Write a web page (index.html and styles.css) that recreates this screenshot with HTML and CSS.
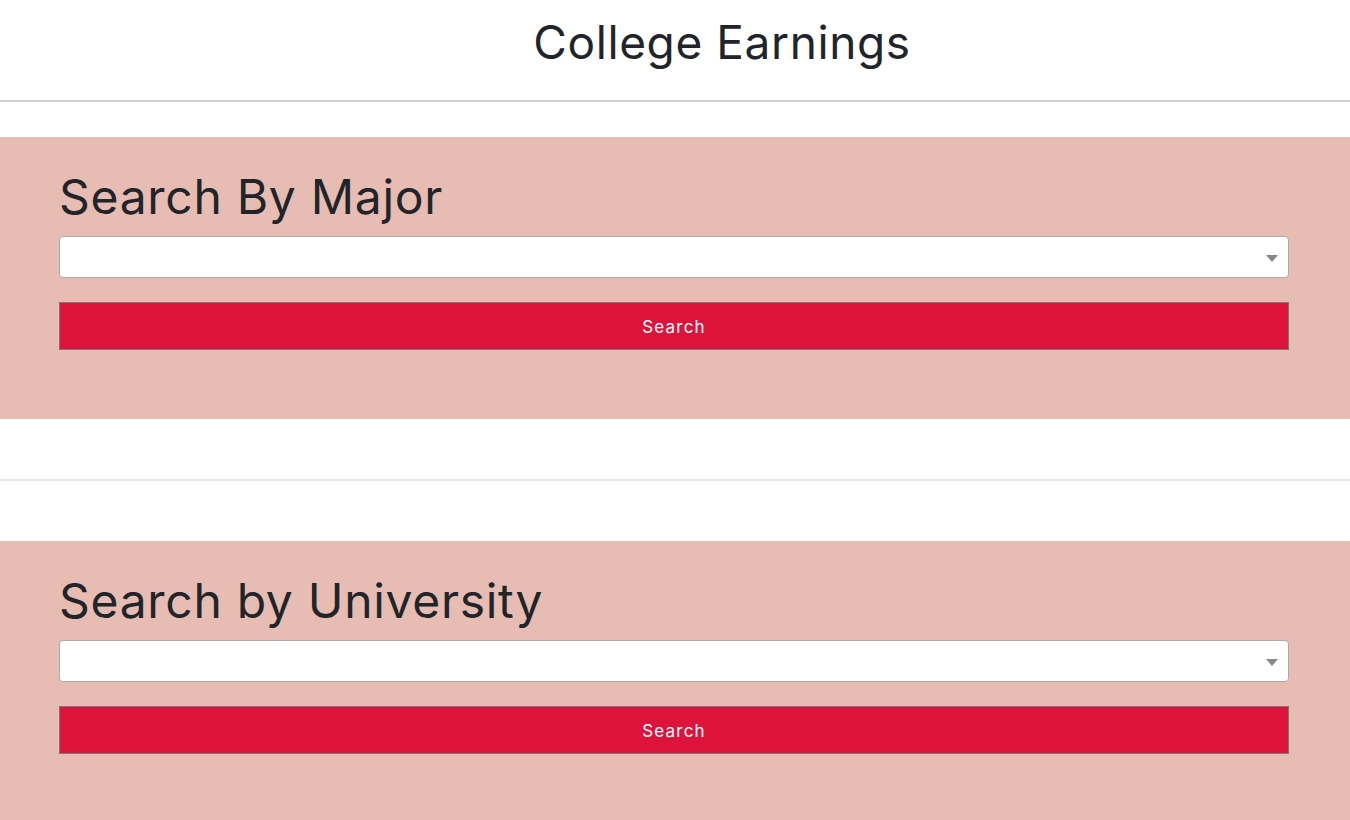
FILE: index.html
```html
<!DOCTYPE html>
<html lang="en">
<head>
<meta charset="utf-8">
<title>College Earnings</title>
<link rel="stylesheet" href="styles.css">
</head>
<body>
<header class="site-header">
  <h1 class="site-title">College Earnings</h1>
</header>
<main>
  <section class="search-panel panel-major">
    <h2 class="panel-title">Search By Major</h2>
    <div class="select-box"><span class="select-arrow"></span></div>
    <button class="search-btn" type="button">Search</button>
  </section>
  <hr class="divider">
  <section class="search-panel panel-university">
    <h2 class="panel-title">Search by University</h2>
    <div class="select-box"><span class="select-arrow"></span></div>
    <button class="search-btn" type="button">Search</button>
  </section>
</main>
</body>
</html>
```

FILE: styles.css
```css
* { box-sizing: border-box; }
html, body { margin: 0; padding: 0; }
body {
  font-family: Inter, "Open Sans", "Liberation Sans", sans-serif;
  color: #212529;
  background: #fff;
  overflow: hidden;
}
.site-header {
  height: 102px;
  border-bottom: 2px solid #d2d2d2;
  display: flex;
  align-items: center;
  justify-content: center;
  padding-left: 94px;
}
.site-title {
  margin: 0;
  font-weight: 400;
  font-size: 46px;
  letter-spacing: 0.6px;
  line-height: 1.2;
  padding-bottom: 14px;
}
main { padding-top: 35px; }
.search-panel {
  background: #e7bcb3;
  padding: 30px 61px 69px 59px;
  display: flex;
  flex-direction: column;
}
.panel-title {
  margin: 0 0 10px 0;
  font-weight: 400;
  font-size: 48px;
  letter-spacing: 0.7px;
  line-height: 59px;
}
.select-box {
  position: relative;
  height: 42px;
  background: #fff;
  border: 1px solid #aaa;
  border-radius: 4px;
}
.select-arrow {
  position: absolute;
  right: 10px;
  top: 18px;
  width: 0;
  height: 0;
  border-left: 6px solid transparent;
  border-right: 6px solid transparent;
  border-top: 7px solid #888;
}
.search-btn {
  margin-top: 24px;
  height: 48px;
  background: #dc143c;
  border: 1px solid #777;
  color: #fff;
  font-family: inherit;
  font-size: 17px;
  letter-spacing: 1.2px;
  padding: 2px 0 0 0;
}
.divider {
  margin: 60px 0 60px 0;
  border: 0;
  border-top: 2px solid #e6e6e6;
  height: 0;
}
```
